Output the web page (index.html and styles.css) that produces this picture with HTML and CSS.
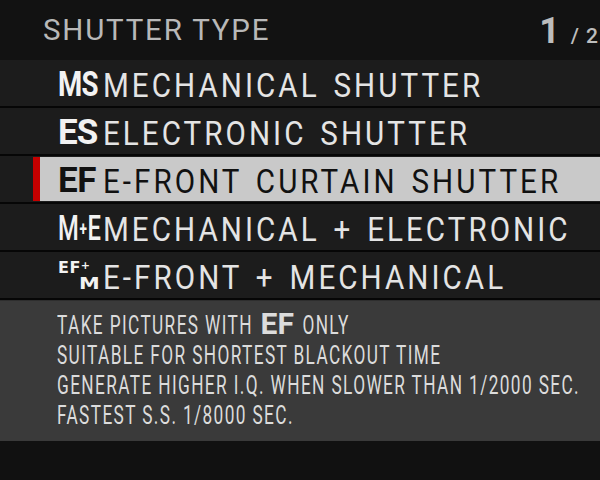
FILE: index.html
```html
<!DOCTYPE html>
<html>
<head>
<meta charset="utf-8">
<link rel="stylesheet" href="styles.css">
</head>
<body>
<div class="screen">
  <header class="head">
    <div class="title">SHUTTER TYPE</div>
    <div class="page"><span class="pg-num">1</span><span class="pg-slash">/</span><span class="pg-den">2</span></div>
  </header>
  <div class="list">
    <div class="row">
      <div class="cell">
        <span class="icon"><span class="ic ic-ms">MS</span></span>
        <span class="label">MECHANICAL SHUTTER</span>
      </div>
    </div>
    <div class="row">
      <div class="cell">
        <span class="icon"><span class="ic ic-es">ES</span></span>
        <span class="label">ELECTRONIC SHUTTER</span>
      </div>
    </div>
    <div class="row sel">
      <div class="cell">
        <span class="icon"><span class="ic ic-ef">EF</span></span>
        <span class="label">E-FRONT CURTAIN SHUTTER</span>
      </div>
    </div>
    <div class="row">
      <div class="cell">
        <span class="icon"><span class="ic ic-me"><span>M</span><span class="plus">+</span><span>E</span></span></span>
        <span class="label">MECHANICAL + ELECTRONIC</span>
      </div>
    </div>
    <div class="row">
      <div class="cell">
        <span class="icon"><span class="ic-stack"><span class="st-top">EF<span class="st-plus">+</span></span><span class="st-bot">M</span></span></span>
        <span class="label">E-FRONT + MECHANICAL</span>
      </div>
    </div>
  </div>
  <div class="desc">
    <div class="line">TAKE PICTURES WITH <span class="desc-ef">EF</span> ONLY</div>
    <div class="line">SUITABLE FOR SHORTEST BLACKOUT TIME</div>
    <div class="line">GENERATE HIGHER I.Q. WHEN SLOWER THAN 1/2000 SEC.</div>
    <div class="line">FASTEST S.S. 1/8000 SEC.</div>
  </div>
</div>
</body>
</html>
```
FILE: styles.css
```css
html, body {
  margin: 0;
  padding: 0;
}
body {
  width: 600px;
  height: 480px;
  overflow: hidden;
  background: #111111;
  font-family: Roboto, "Liberation Sans", sans-serif;
}
.screen {
  display: flex;
  flex-direction: column;
  width: 600px;
  height: 480px;
  background: #111111;
  overflow: hidden;
}
.head {
  height: 60px;
  box-sizing: border-box;
  display: flex;
  align-items: center;
  padding-left: 43px;
  padding-top: 2px;
  background: #121212;
}
.title {
  font-size: 29.5px;
  letter-spacing: 1.8px;
  color: #b8b8b8;
  line-height: 1;
  white-space: nowrap;
}
.page {
  margin-left: auto;
  margin-right: 2px;
  flex: none;
  white-space: nowrap;
  color: #bdbdbd;
  display: flex;
  align-items: baseline;
  line-height: 1;
}
.pg-num {
  font-size: 36px;
  font-weight: 700;
}
.pg-slash {
  font-size: 21px;
  font-weight: 500;
  margin: 0 7px 0 11px;
}
.pg-den {
  font-size: 21px;
  font-weight: 500;
}
.list {
  display: flex;
  flex-direction: column;
  gap: 2px;
  background: #060606;
  padding-bottom: 2px;
}
.row {
  height: 46px;
  display: flex;
  padding-left: 33px;
  background: #1c1c1c;
  overflow: hidden;
}
.cell {
  flex: 1;
  min-width: 0;
  display: flex;
  align-items: center;
  padding-left: 18px;
  padding-top: 3px;
  border-left: 7px solid transparent;
}
.row.sel .cell {
  background: #c9c9c9;
  border-left-color: #c40000;
  margin: 1px 0;
}
.icon {
  width: 45px;
  flex: none;
  color: #f2f2f2;
  display: flex;
  align-items: center;
  line-height: 1;
}
.ic {
  display: inline-block;
  font-size: 35px;
  font-weight: 700;
  white-space: nowrap;
  transform-origin: 0 50%;
}
.ic-ms {
  transform: scaleX(0.79);
  letter-spacing: -1px;
}
.ic-es {
  letter-spacing: -1px;
}
.ic-ef {
  letter-spacing: -0.5px;
}
.ic-me {
  display: inline-flex;
  align-items: center;
  font-weight: 500;
  transform: scaleX(0.68);
}
.ic-me .plus {
  font-size: 20px;
  font-weight: 700;
  margin: 0 1px;
}
.ic-stack {
  display: flex;
  flex-direction: column;
  font-family: "DejaVu Sans", sans-serif;
  font-weight: 700;
  font-size: 16px;
  line-height: 14px;
  margin-top: -1px;
}
.st-top {
  display: flex;
  align-items: flex-start;
  letter-spacing: 0.5px;
}
.st-plus {
  font-size: 11px;
  line-height: 10px;
}
.st-bot {
  padding-left: 21px;
  padding-top: 2px;
  display: inline-block;
  transform: scaleX(1.3);
  transform-origin: 21px 50%;
}
.label {
  display: block;
  flex: 1;
  min-width: 0;
  font-size: 34px;
  color: #e4e4e4;
  line-height: 1;
  white-space: nowrap;
  letter-spacing: 3.5px;
  word-spacing: 4px;
  transform: scaleX(0.87);
  transform-origin: 0 50%;
}
.sel .icon,
.sel .label {
  color: #111111;
}
.desc {
  height: 141px;
  box-sizing: border-box;
  background: #3a3a3a;
  padding: 9px 0 0 57px;
  border-top: 1px solid #2e2e2e;
  overflow: hidden;
}
.line {
  font-size: 25px;
  line-height: 30px;
  letter-spacing: 2px;
  color: #dcdcdc;
  white-space: nowrap;
  transform: scaleX(0.69);
  transform-origin: 0 0;
}
.desc-ef {
  display: inline-block;
  font-size: 29px;
  font-weight: 700;
  letter-spacing: 0;
  transform: scaleX(1.5);
  transform-origin: 0 50%;
  margin: 0 20px 0 3px;
  line-height: 1;
}
```
